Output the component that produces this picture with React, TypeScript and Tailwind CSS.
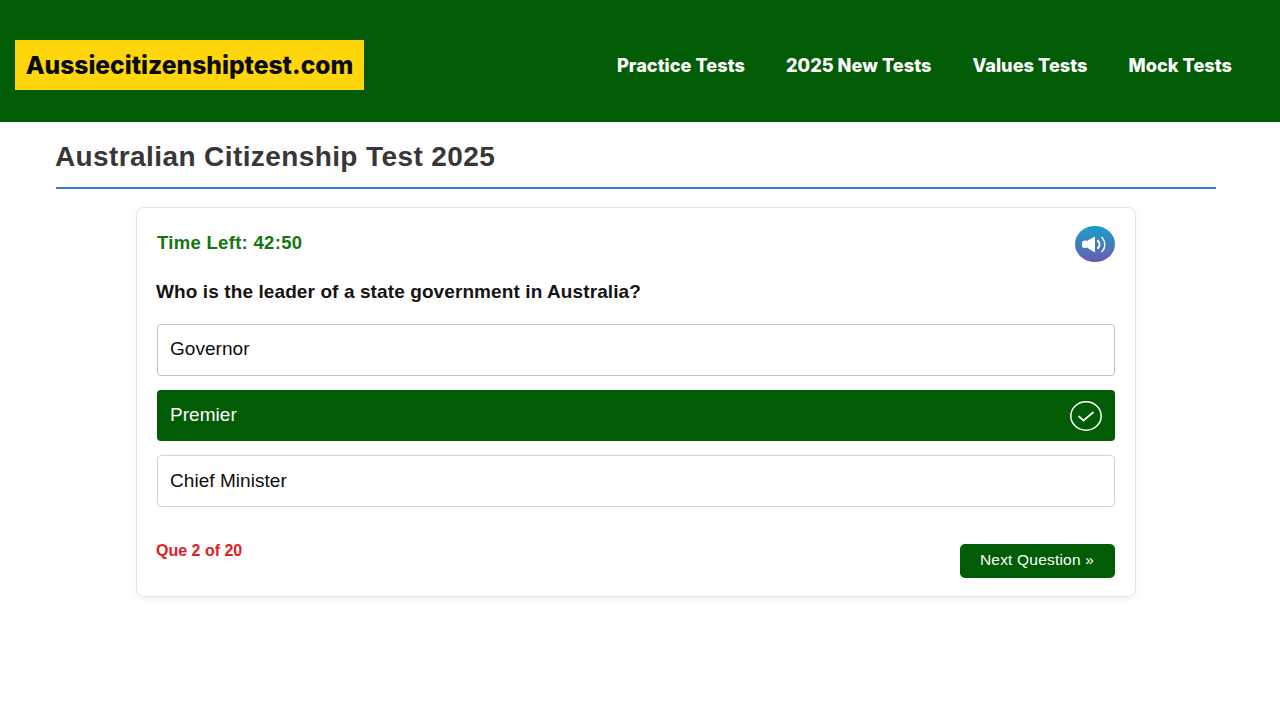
import React from 'react'

const navLinks = ['Practice Tests', '2025 New Tests', 'Values Tests', 'Mock Tests']

const SoundIcon = () => (
  <svg viewBox="0 0 40 36" className="w-[40px] h-[36px] mt-[2px]" aria-hidden="true">
    <defs>
      <linearGradient id="soundGrad" x1="0" y1="0" x2="0" y2="1">
        <stop offset="0" stopColor="#1a9fc9" />
        <stop offset="1" stopColor="#6a5bb0" />
      </linearGradient>
    </defs>
    <ellipse cx="20" cy="18" rx="20" ry="18" fill="url(#soundGrad)" />
    <rect x="7" y="14.5" width="6" height="7.5" rx="2.5" fill="#fff" />
    <path d="M12.5 14.5 L20 10.5 V26.5 L12.5 22 Z" fill="#fff" />
    <path d="M23 15 a5 5 0 0 1 0 7" fill="none" stroke="#fff" strokeWidth="2.2" strokeLinecap="round" />
    <path d="M27 11.5 a10 10 0 0 1 0 14" fill="none" stroke="#fff" strokeWidth="1.5" strokeLinecap="round" />
  </svg>
)

const CheckIcon = () => (
  <svg viewBox="0 0 32 30" className="w-[32px] h-[30px]" fill="none" stroke="#fff" aria-hidden="true">
    <ellipse cx="16" cy="15" rx="15.2" ry="14.2" strokeWidth="1.5" />
    <path d="M9 15.5 L13.5 19.5 L23 11.5" strokeWidth="1.7" strokeLinecap="round" strokeLinejoin="round" />
  </svg>
)

export default function App() {
  return (
    <div className="min-h-[720px] bg-white font-['Liberation_Sans',Arial,sans-serif]">
      {/* Header */}
      <header className="h-[122px] pt-[8px] bg-[#025c05] flex items-center justify-between pl-[15px] pr-[48px]">
        <div className="w-[349px] h-[50px] bg-[#ffd60a] flex items-center justify-center font-['Inter',sans-serif] font-extrabold text-[24.6px] text-[#0a0a0a] whitespace-nowrap">
          Aussiecitizenshiptest.com
        </div>
        <nav className="flex items-center gap-[41px] pt-[2px] font-['Inter',sans-serif] font-extrabold text-[18.2px] text-white">
          {navLinks.map((link) => (
            <a key={link} className="whitespace-nowrap">
              {link}
            </a>
          ))}
        </nav>
      </header>

      <main className="mx-[56px] w-[1160px]">
        <div className="h-[67px] pt-[17px] border-b-2 border-[#2f7fd0]">
          <h1 className="-ml-px text-[28px] leading-[36px] font-bold text-[#3a3638] tracking-[0.4px]">
            Australian Citizenship Test 2025
          </h1>
        </div>

        {/* Question card */}
        <div className="mt-[18px] ml-[80px] w-[1000px] h-[390px] bg-white border border-[#e3e3e3] rounded-[8px] shadow-[0_2px_6px_rgba(0,0,0,0.06)] pt-[17px] px-[20px]">
          <div className="flex items-center justify-between h-[36px]">
            <span className="text-[18.5px] font-bold tracking-[0.3px] text-[#11770f]">Time Left: 42:50</span>
            <SoundIcon />
          </div>

          <p className="mt-[19px] -ml-px text-[19px] leading-[24px] font-bold tracking-[0.1px] text-[#161313]">
            Who is the leader of a state government in Australia?
          </p>

          <div className="mt-[20px] flex flex-col gap-[14px] text-[19px] tracking-[0.05px]">
            <div className="h-[52px] flex items-center px-[12px] pb-[1px] bg-white border border-[#c4c4c4] rounded-[4px] text-[#0d0d0d]">
              Governor
            </div>
            <div className="h-[51px] flex items-center justify-between pl-[13px] pr-[13px] bg-[#025c05] rounded-[4px] text-white">
              Premier
              <CheckIcon />
            </div>
            <div className="h-[52px] flex items-center px-[12px] bg-white border border-[#d4d4d4] rounded-[4px] text-[#0d0d0d]">
              Chief Minister
            </div>
          </div>

          <div className="mt-[37px] flex items-start justify-between">
            <span className="-ml-px -mt-[3px] text-[16px] leading-[20px] font-bold text-[#e01e1e]">Que 2 of 20</span>
            <button className="w-[155px] h-[34px] pb-[2px] pr-[1px] bg-[#025c05] rounded-[5px] text-white text-[15.5px] tracking-[0.2px]">
              Next Question »
            </button>
          </div>
        </div>
      </main>
    </div>
  )
}
